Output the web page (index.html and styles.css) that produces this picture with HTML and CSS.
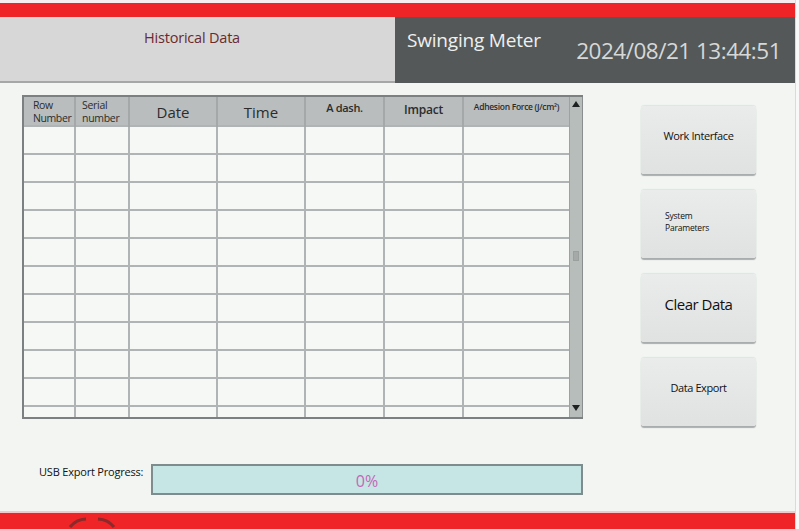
FILE: index.html
```html
<!DOCTYPE html>
<html lang="en">
<head>
<meta charset="utf-8">
<title>Historical Data</title>
<link rel="stylesheet" href="styles.css">
</head>
<body>
<div class="screen">
  <div class="top-strip"></div>
  <div class="red-bar"></div>
  <header class="header">
    <div class="title-panel"><span class="page-title">Historical Data</span></div>
    <div class="info-panel">
      <span class="device-name">Swinging Meter</span>
      <span class="clock">2024/08/21 13:44:51</span>
    </div>
  </header>
  <main class="content">
    <section class="grid-area">
      <div class="table-box">
        <table class="records">
          <colgroup>
            <col class="c-row"><col class="c-serial"><col class="c-date"><col class="c-time">
            <col class="c-dash"><col class="c-impact"><col class="c-force">
          </colgroup>
          <thead>
            <tr>
              <th class="h-small h-left">Row<br>Number</th>
              <th class="h-small h-left">Serial<br>number</th>
              <th class="h-big">Date</th>
              <th class="h-big">Time</th>
              <th class="h-dash">A dash.</th>
              <th class="h-impact">Impact</th>
              <th class="h-force">Adhesion Force (J/cm²)</th>
            </tr>
          </thead>
          <tbody>
            <tr><td></td><td></td><td></td><td></td><td></td><td></td><td></td></tr>
            <tr><td></td><td></td><td></td><td></td><td></td><td></td><td></td></tr>
            <tr><td></td><td></td><td></td><td></td><td></td><td></td><td></td></tr>
            <tr><td></td><td></td><td></td><td></td><td></td><td></td><td></td></tr>
            <tr><td></td><td></td><td></td><td></td><td></td><td></td><td></td></tr>
            <tr><td></td><td></td><td></td><td></td><td></td><td></td><td></td></tr>
            <tr><td></td><td></td><td></td><td></td><td></td><td></td><td></td></tr>
            <tr><td></td><td></td><td></td><td></td><td></td><td></td><td></td></tr>
            <tr><td></td><td></td><td></td><td></td><td></td><td></td><td></td></tr>
            <tr><td></td><td></td><td></td><td></td><td></td><td></td><td></td></tr>
            <tr class="last-row"><td></td><td></td><td></td><td></td><td></td><td></td><td></td></tr>
          </tbody>
        </table>
        <div class="scrollbar">
          <span class="arrow up"></span>
          <span class="grip"></span>
          <span class="arrow down"></span>
        </div>
      </div>
      <div class="progress-row">
        <span class="progress-label">USB Export Progress:</span>
        <div class="progress-bar"><span class="progress-value">0%</span></div>
      </div>
    </section>
    <nav class="actions">
      <button class="action">Work Interface</button>
      <button class="action small-left">System<br>Parameters</button>
      <button class="action big">Clear Data</button>
      <button class="action">Data Export</button>
    </nav>
  </main>
  <footer class="footer">
    <svg class="footer-mark" width="60" height="16" viewBox="0 0 60 16">
      <path d="M8 14 A22 22 0 0 1 24 6" fill="none" stroke="#8a2a2a" stroke-width="3"/>
      <path d="M36 6 A22 22 0 0 1 52 14" fill="none" stroke="#8a2a2a" stroke-width="3"/>
    </svg>
  </footer>
</div>
</body>
</html>
```

FILE: styles.css
```css
html, body {
  margin: 0;
  padding: 0;
}

body {
  width: 799px;
  height: 529px;
  overflow: hidden;
  background: #f7f8f7;
  font-family: "Open Sans", "Noto Sans", sans-serif;
}

.screen {
  width: 795px;
  height: 529px;
  display: flex;
  flex-direction: column;
  background: #f2f5f2;
  border-right: 1px solid #d8dcd8;
}

.top-strip {
  height: 3px;
  background: #f6eeee;
}

.red-bar {
  height: 14px;
  background: #ee2426;
}

/* header: page title on grey, device name and clock on dark */
.header {
  height: 66px;
  display: flex;
}

.title-panel {
  width: 395px;
  background: #d7d7d7;
  border-bottom: 2px solid #a6a8a8;
  box-sizing: border-box;
  display: flex;
  justify-content: center;
  padding-top: 11px;
  padding-right: 11px;
}

.page-title {
  color: #6a2a2e;
  font-size: 14.5px;
  letter-spacing: -0.2px;
}

.info-panel {
  flex: 1;
  background: #545858;
  display: flex;
  align-items: flex-start;
  justify-content: space-between;
  padding: 9px 14px 0 12px;
}

.device-name {
  color: #eef0f0;
  font-size: 19px;
  letter-spacing: -0.2px;
  padding-top: 1px;
}

.clock {
  color: #d6d8d8;
  font-size: 22.5px;
  letter-spacing: -0.5px;
  padding-top: 9px;
}

/* main area */
.content {
  flex: 1;
  display: flex;
  padding: 12px 0 0 22px;
}

.grid-area {
  width: 561px;
  display: flex;
  flex-direction: column;
}

.table-box {
  display: flex;
  height: 324px;
  border: 2px solid #7c8080;
  border-right: none;
  box-sizing: border-box;
  overflow: hidden;
  background: #f4f7f4;
}

.records {
  border-collapse: collapse;
  table-layout: fixed;
  width: 545px;
}

.c-row { width: 51px; }
.c-serial { width: 54px; }
.c-date { width: 88px; }
.c-time { width: 88px; }
.c-dash { width: 79px; }
.c-impact { width: 79px; }
.c-force { width: 106px; }

.records th {
  height: 26px;
  padding: 1px 0 0;
  box-sizing: border-box;
  background: #b9bdbd;
  border-left: 2px solid #a4a8a8;
  color: #2c2c2c;
  font-weight: normal;
  vertical-align: top;
  white-space: nowrap;
  overflow: hidden;
}

.records th:first-child,
.records td:first-child {
  border-left: none;
}

.h-small {
  font-size: 10.5px;
  line-height: 13px;
  color: #505454;
  letter-spacing: -0.3px;
  padding-top: 2px !important;
}

.h-left {
  text-align: left;
  padding-left: 8px !important;
}

.records th.h-left:first-child {
  padding-left: 9px !important;
  letter-spacing: -0.4px;
}

.records th.h-left + th.h-left {
  padding-left: 6px !important;
}

.h-big {
  font-size: 15px;
  line-height: 26px;
  padding-top: 2px !important;
}

.h-dash {
  font-size: 11px;
  font-weight: 600 !important;
  line-height: 20px;
  letter-spacing: -0.3px;
}

.h-impact {
  font-size: 12px;
  font-weight: 600 !important;
  line-height: 24px;
  letter-spacing: -0.2px;
}

.h-force {
  font-size: 8.5px;
  font-weight: 600 !important;
  line-height: 18px;
  letter-spacing: -0.3px;
}

.records td {
  height: 26px;
  padding: 0;
  border-left: 2px solid #b0b4b4;
  border-top: 2px solid #b0b4b4;
  background: #f5f8f5;
}

.records .last-row td {
  height: 13px;
}

.scrollbar {
  width: 15px;
  background: #b7bdba;
  border-left: 1px solid #9ca2a0;
  border-right: 1px solid #8a8e8e;
  display: flex;
  flex-direction: column;
  align-items: center;
  justify-content: space-between;
  padding: 4px 0 2px;
  box-sizing: border-box;
}

.arrow {
  width: 0;
  height: 0;
  border-left: 4px solid transparent;
  border-right: 4px solid transparent;
}

.arrow.up {
  border-bottom: 6px solid #1f2222;
}

.arrow.down {
  border-top: 6px solid #1f2222;
  margin-bottom: 4px;
}

.grip {
  width: 4px;
  height: 8px;
  background: #a5aaa8;
  border: 1px solid #9aa09e;
}

/* export progress */
.progress-row {
  display: flex;
  align-items: center;
  margin-top: 45px;
}

.progress-label {
  width: 129px;
  box-sizing: border-box;
  padding-left: 17px;
  font-size: 11px;
  color: #111;
  letter-spacing: -0.2px;
  margin-top: -17px;
}

.progress-bar {
  width: 432px;
  height: 31px;
  box-sizing: border-box;
  background: #c6e5e5;
  border: 2px solid #7e8c8e;
  display: flex;
  align-items: center;
  justify-content: center;
}

.progress-value {
  color: #c566b8;
  font-size: 16px;
  margin-top: 2px;
}

/* side buttons */
.actions {
  display: flex;
  flex-direction: column;
  gap: 16px;
  padding: 11px 0 0 58px;
}

.action {
  width: 115px;
  height: 68px;
  border: none;
  border-radius: 3px;
  background: linear-gradient(#eaeceb, #dfe2e1);
  box-shadow: 0 2px 1px #a9adad, 0 -1px 1px #e2e4e3;
  font-family: "Open Sans", "Noto Sans", sans-serif;
  font-size: 11px;
  color: #111;
  letter-spacing: -0.4px;
  padding: 0 0 10px;
  cursor: pointer;
}

.action.small-left {
  text-align: left;
  padding-left: 24px;
  padding-bottom: 4px;
  font-size: 8.5px;
  line-height: 12px;
  letter-spacing: -0.2px;
}

.action.big {
  font-size: 15px;
  letter-spacing: -0.5px;
  padding-bottom: 8px;
}

/* bottom bar */
.footer {
  height: 18px;
  background: #ee2426;
  border-top: 2px solid #f4c8c8;
  box-sizing: border-box;
  display: flex;
  align-items: flex-end;
  padding-left: 62px;
}

.footer-mark {
  display: block;
}
```
